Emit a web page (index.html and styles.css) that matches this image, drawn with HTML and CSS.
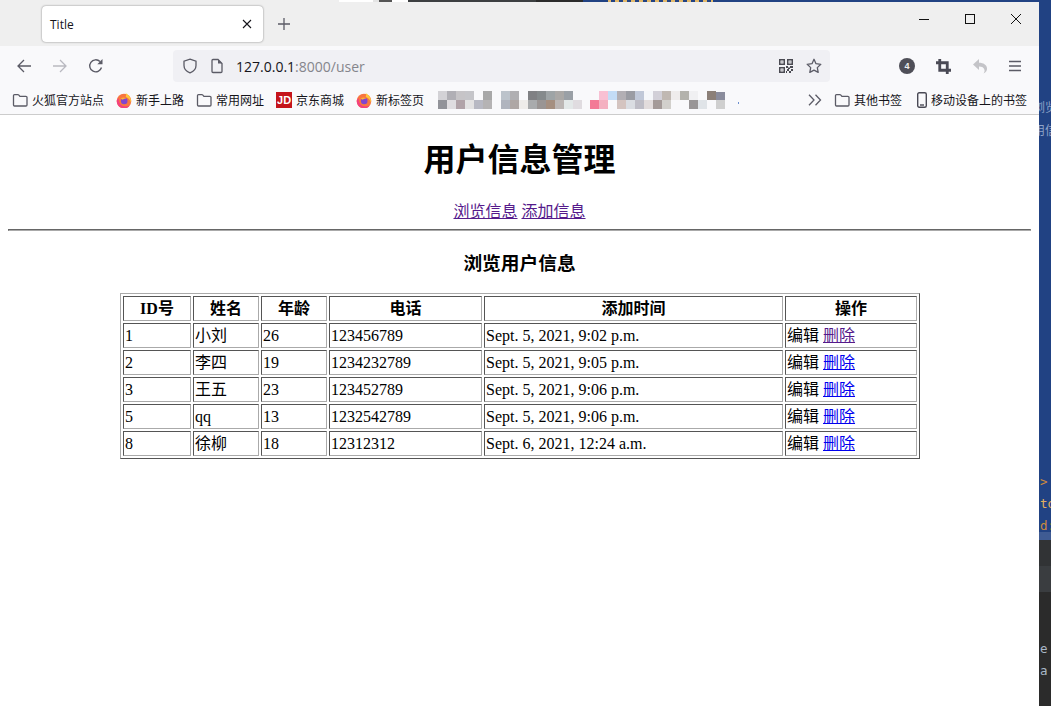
FILE: index.html
```html
<!DOCTYPE html>
<html lang="zh">
<head>
<meta charset="utf-8">
<title>Title</title>
<link rel="stylesheet" href="styles.css">
</head>
<body>
<svg class="defs" width="0" height="0" aria-hidden="true">
  <defs>
    <symbol id="folder" viewBox="0 0 16 16"><path d="M1.500 13V3.600c0-.6.4-1 1-1h3.400c.4 0 .7.2 1 .5l1 1.200h6c.6 0 1.100.4 1.100 1V13c0 .6-.5 1-1.100 1h-11.400c-.6 0-1-.4-1-1z" fill="none" stroke="#5b5b66" stroke-width="1.300"/></symbol>
    <symbol id="fox" viewBox="0 0 16 16">
      <circle cx="8" cy="9" r="7.300" fill="#f9763f"/>
      <path d="M.7 9a7.300 7.300 0 0 0 13.500 3.800c-2 2-7 2.400-9.700-.6C3 10 2.600 8 2.800 6 1.600 7 .7 8 .7 9z" fill="#f4417e"/>
      <path d="M9.500 .5c1 1.700 3.700 2.700 4.900 5.800.6 1.500.8 3 .6 4.400-.6-2.700-3-5-5.300-5.700C10.500 3.300 10 1.800 9.500 .5z" fill="#ffc93a"/>
      <circle cx="8.200" cy="9" r="3.300" fill="#8245cf"/>
      <path d="M4.700 6.500c2-1.400 4.300-1 5.500.3-1.500-.2-2.700 0-3.200 1-.8-.2-1.700-.6-2.300-1.300z" fill="#ffb02e"/>
    </symbol>
  </defs>
</svg>
<div class="desktop">
  <div class="topstrip">
    <span class="seg seg-a"></span><span class="seg seg-b"></span><span class="seg seg-c"></span><span class="seg seg-d"></span><span class="seg seg-e"></span><span class="seg seg-f"></span><span class="seg seg-g"></span><span class="seg seg-h"></span>
  </div>
  <div class="screen">
    <div class="window">
      <div class="tabbar">
        <div class="tab">
          <span class="tab-title">Title</span>
          <svg class="tab-x" width="10" height="10" viewBox="0 0 10 10"><path d="M1 1l8 8M9 1l-8 8" stroke="#15141a" stroke-width="1.100"/></svg>
        </div>
        <svg class="newtab" width="14" height="14" viewBox="0 0 14 14"><path d="M7 1v12M1 7h12" stroke="#5b5b66" stroke-width="1.300"/></svg>
        <div class="winctl">
          <svg width="12" height="12" viewBox="0 0 12 12"><path d="M1 6.500h10" stroke="#111" stroke-width="1"/></svg>
          <svg width="12" height="12" viewBox="0 0 12 12"><rect x="1.500" y="1.500" width="9" height="9" fill="none" stroke="#111" stroke-width="1"/></svg>
          <svg width="12" height="12" viewBox="0 0 12 12"><path d="M1 1l10 10M11 1L1 11" stroke="#111" stroke-width="1"/></svg>
        </div>
      </div>
      <div class="toolbar">
        <svg class="nav-back" width="16" height="16" viewBox="0 0 16 16"><path d="M15 8H2M8 2L2 8l6 6" fill="none" stroke="#5b5b66" stroke-width="1.300"/></svg>
        <svg class="nav-fwd" width="16" height="16" viewBox="0 0 16 16"><path d="M1 8h13M8 2l6 6-6 6" fill="none" stroke="#b9b9c0" stroke-width="1.300"/></svg>
        <svg class="nav-reload" width="16" height="16" viewBox="0 0 16 16"><path d="M13.500 9.500A6 6 0 1 1 12 3.600" fill="none" stroke="#5b5b66" stroke-width="1.400"/><path d="M14.500 1v5.200H9.300z" fill="#5b5b66"/></svg>
        <div class="urlbar">
          <svg class="url-shield" width="16" height="16" viewBox="0 0 16 16"><path d="M8 1.200l6 2v4.300c0 3.500-2.500 6-6 7.300-3.500-1.300-6-3.800-6-7.300V3.200z" fill="none" stroke="#5b5b66" stroke-width="1.300"/></svg>
          <svg class="url-page" width="14" height="16" viewBox="0 0 14 16"><path d="M2 2.500c0-.6.5-1 1-1h5l4 4v8c0 .6-.5 1-1 1H3c-.5 0-1-.4-1-1z" fill="none" stroke="#5b5b66" stroke-width="1.300"/><path d="M8 1.500v4h4z" fill="#5b5b66"/></svg>
          <span class="url-text">127.0.0.1<span class="url-dim">:8000/user</span></span>
          <svg class="url-qr" width="14" height="14" viewBox="0 0 14 14"><path d="M0 0h6v6H0zM1.500 1.500v3h3v-3zM8 0h6v6H8zM9.500 1.500v3h3v-3zM0 8h6v6H0zM1.500 9.500v3h3v-3z" fill="#4a4a52" fill-rule="evenodd"/><path d="M2.500 2.500h1v1h-1zM10.500 2.500h1v1h-1zM2.500 10.500h1v1h-1zM7 7h2v2H7zM11 7h3v2h-3zM8 10h2v2H8zM12 10h2v2h-2zM7 12h1v2H7zM10 12h2v2h-2zM9 8.500h2v1.500H9z" fill="#4a4a52"/></svg>
          <svg class="url-star" width="16" height="16" viewBox="0 0 16 16"><path d="M8 1.300l2 4.400 4.800.6-3.500 3.300.9 4.800L8 12.100l-4.200 2.300.9-4.800L1.200 6.300 6 5.700z" fill="none" stroke="#5b5b66" stroke-width="1.300" stroke-linejoin="round"/></svg>
        </div>
        <div class="tools">
          <span class="badge">4</span>
          <svg width="15" height="15" viewBox="0 0 16 16"><path d="M4 0v12h12M0 4h12v12" fill="none" stroke="#4a4a55" stroke-width="3"/></svg>
          <svg width="16" height="16" viewBox="0 0 16 16"><path d="M7 1L1 6.500 7 12V8.500c3 0 5 1 5.500 3.500.3 1.200-.3 2.500-1 3.500 2.500-1 3.800-3.200 3.500-5.500C14.500 7 11.500 4.800 7 4.800z" fill="#c4c4c8"/></svg>
          <svg width="14" height="14" viewBox="0 0 14 14"><path d="M0 2.500h12M0 7h12M0 11.500h12" stroke="#5b5b66" stroke-width="1.300"/></svg>
        </div>
      </div>
      <div class="bookmarks">
        <span class="bm"><svg class="bm-icon"><use href="#folder"/></svg>火狐官方站点</span>
        <span class="bm"><svg class="bm-icon"><use href="#fox"/></svg>新手上路</span>
        <span class="bm"><svg class="bm-icon"><use href="#folder"/></svg>常用网址</span>
        <span class="bm"><span class="jd">JD</span>京东商城</span>
        <span class="bm"><svg class="bm-icon"><use href="#fox"/></svg>新标签页</span>
        <svg class="mosaic" width="302" height="18" viewBox="0 0 302 18" shape-rendering="crispEdges">
          <g>
            <rect x="0" y="0" width="9" height="9" fill="#d3d2d6"/><rect x="9" y="0" width="9" height="9" fill="#b0afb5"/><rect x="18" y="0" width="9" height="9" fill="#c6c4c7"/><rect x="27" y="0" width="9" height="9" fill="#c5c5c9"/><rect x="45" y="0" width="9" height="9" fill="#a8a8a8"/><rect x="63" y="0" width="9" height="9" fill="#bcc3cb"/><rect x="72" y="0" width="9" height="9" fill="#b0afb2"/><rect x="90" y="0" width="9" height="9" fill="#808184"/><rect x="99" y="0" width="9" height="9" fill="#858a8c"/><rect x="108" y="0" width="9" height="9" fill="#9ea4a6"/><rect x="117" y="0" width="9" height="9" fill="#aaa8a6"/><rect x="126" y="0" width="9" height="9" fill="#9aa0a6"/><rect x="161" y="0" width="9" height="9" fill="#f8c0d3"/><rect x="170" y="0" width="9" height="9" fill="#c3dcf6"/><rect x="179" y="0" width="9" height="9" fill="#b2afb4"/><rect x="188" y="0" width="9" height="9" fill="#9a9ca3"/><rect x="197" y="0" width="9" height="9" fill="#c0c8d8"/><rect x="206" y="0" width="9" height="9" fill="#f5f7fa"/><rect x="215" y="0" width="9" height="9" fill="#d2d0d8"/><rect x="224" y="0" width="9" height="9" fill="#c0b8b2"/><rect x="233" y="0" width="9" height="9" fill="#efecec"/><rect x="242" y="0" width="9" height="9" fill="#b3b2ac"/><rect x="251" y="0" width="9" height="9" fill="#f0f0f2"/><rect x="269" y="0" width="9" height="9" fill="#8c8078"/><rect x="278" y="1" width="9" height="8" fill="#8a8c9c"/>
            <rect x="0" y="9" width="9" height="9" fill="#929399"/><rect x="9" y="9" width="9" height="9" fill="#dfdde0"/><rect x="18" y="9" width="9" height="9" fill="#b1a3a8"/><rect x="27" y="9" width="9" height="9" fill="#e3e2e2"/><rect x="36" y="9" width="9" height="9" fill="#b8b9c3"/><rect x="45" y="9" width="9" height="9" fill="#b5b3b4"/><rect x="63" y="9" width="9" height="9" fill="#b0b4be"/><rect x="72" y="9" width="9" height="9" fill="#aea7a5"/><rect x="81" y="9" width="9" height="9" fill="#eeecea"/><rect x="90" y="9" width="9" height="9" fill="#a9abad"/><rect x="99" y="9" width="9" height="9" fill="#9a9594"/><rect x="108" y="9" width="9" height="9" fill="#a58f80"/><rect x="117" y="9" width="9" height="9" fill="#bcb6b4"/><rect x="126" y="9" width="9" height="9" fill="#e3e8e8"/><rect x="135" y="9" width="9" height="9" fill="#e0dce0"/><rect x="152" y="9" width="9" height="9" fill="#f37a96"/><rect x="161" y="9" width="9" height="9" fill="#f4b0c0"/><rect x="179" y="9" width="9" height="9" fill="#d4c4c0"/><rect x="188" y="9" width="9" height="9" fill="#dadde2"/><rect x="197" y="9" width="9" height="9" fill="#bebdc6"/><rect x="206" y="9" width="9" height="9" fill="#e2dcdc"/><rect x="215" y="9" width="9" height="9" fill="#a49a98"/><rect x="224" y="9" width="9" height="9" fill="#d2d0cc"/><rect x="251" y="9" width="9" height="9" fill="#989596"/><rect x="260" y="9" width="9" height="9" fill="#e0e4e8"/><rect x="278" y="9" width="9" height="9" fill="#cfcfcf"/><rect x="300" y="11" width="1" height="2" fill="#6c8fd0"/>
          </g>
        </svg>
        <svg class="chev" width="14" height="12" viewBox="0 0 14 12"><path d="M1 .8L6 6l-5 5.200M7.500 .8L12.500 6l-5 5.200" fill="none" stroke="#5b5b66" stroke-width="1.300"/></svg>
        <span class="bm"><svg class="bm-icon"><use href="#folder"/></svg>其他书签</span>
        <span class="bm bm-phone"><svg class="phone" width="10" height="16" viewBox="0 0 10 16"><rect x=".7" y=".7" width="8.600" height="14.600" rx="1.500" fill="none" stroke="#4a4a55" stroke-width="1.400"/><path d="M3 13h4" stroke="#4a4a55" stroke-width="1.400"/></svg>移动设备上的书签</span>
      </div>
      <main class="content">
        <h1 class="page-title">用户信息管理</h1>
        <p class="nav-links"><a class="visited" href="#">浏览信息</a> <a class="visited" href="#">添加信息</a></p>
        <hr class="rule">
        <h3 class="sub-title">浏览用户信息</h3>
        <table class="users">
          <colgroup><col class="c1"><col class="c2"><col class="c3"><col class="c4"><col class="c5"><col class="c6"></colgroup>
          <thead>
            <tr><th>ID号</th><th>姓名</th><th>年龄</th><th>电话</th><th>添加时间</th><th>操作</th></tr>
          </thead>
          <tbody>
            <tr><td>1</td><td>小刘</td><td>26</td><td>123456789</td><td>Sept. 5, 2021, 9:02 p.m.</td><td>编辑 <a class="visited" href="#">删除</a></td></tr>
            <tr><td>2</td><td>李四</td><td>19</td><td>1234232789</td><td>Sept. 5, 2021, 9:05 p.m.</td><td>编辑 <a href="#">删除</a></td></tr>
            <tr><td>3</td><td>王五</td><td>23</td><td>123452789</td><td>Sept. 5, 2021, 9:06 p.m.</td><td>编辑 <a href="#">删除</a></td></tr>
            <tr><td>5</td><td>qq</td><td>13</td><td>1232542789</td><td>Sept. 5, 2021, 9:06 p.m.</td><td>编辑 <a href="#">删除</a></td></tr>
            <tr><td>8</td><td>徐柳</td><td>18</td><td>12312312</td><td>Sept. 6, 2021, 12:24 a.m.</td><td>编辑 <a href="#">删除</a></td></tr>
          </tbody>
        </table>
      </main>
    </div>
    <aside class="side">
      <div class="side-blue">
        <div class="cjk-line first">浏览</div>
        <div class="cjk-line">用信</div>
        <div class="code orange first-code">&gt;</div>
        <div class="code yellow">to</div>
        <div class="code orange">d:</div>
      </div>
      <div class="side-sel"></div>
      <div class="side-dark1"></div>
      <div class="side-dark2"></div>
      <div class="side-dark3">
        <div class="code pale first-dark">e</div>
        <div class="code pale">a</div>
      </div>
    </aside>
  </div>
</div>
</body>
</html>
```

FILE: styles.css
```css
* { box-sizing: border-box; }
html, body { margin: 0; padding: 0; height: 100%; overflow: hidden; background: #fff; }
body { font-family: "Liberation Serif", "Noto Sans CJK SC", serif; font-size: 16px; color: #000; }
.defs { position: absolute; }

.desktop { display: flex; flex-direction: column; height: 706px; width: 1051px; overflow: hidden; }

.topstrip { display: flex; height: 2px; flex: none; }
.seg { display: block; height: 100%; }
.seg-a { width: 339px; background: #efefef; }
.seg-b { width: 34px; background: #fff; }
.seg-c { width: 6px; background: #e4e4e4; }
.seg-d { width: 13px; background: #555; }
.seg-e { width: 16px; background: #fff; }
.seg-f { width: 128px; background: #3c3f41; }
.seg-g { width: 47px; background: #2b2b2b; }
.seg-h { flex: 1; background: linear-gradient(90deg, #214283 0 25px, transparent 25px 130px, #214283 130px), repeating-linear-gradient(90deg, #e3b96a 0 4px, #214283 4px 8px); }

.screen { display: flex; flex: 1; min-height: 0; }
.window { width: 1039px; flex: none; display: flex; flex-direction: column; background: #fff; }

.tabbar { height: 44px; flex: none; display: flex; align-items: flex-start; background: #efefef; padding-left: 42px; }
.tab { width: 221px; height: 36px; margin-top: 4px; padding: 0 11px 0 8px; background: #fff; border-radius: 4px; box-shadow: 0 0 2px rgba(0,0,0,.5); display: flex; align-items: center; justify-content: space-between; }
.tab-title { font: 12px "Open Sans", "Liberation Sans", sans-serif; color: #15141a; }
.newtab { margin: 15px 0 0 14px; }
.winctl { margin-left: auto; margin-top: 11px; padding-right: 17px; display: flex; gap: 34px; }

.toolbar { height: 40px; flex: none; display: flex; align-items: center; background: #f9f9fb; padding-left: 16px; }
.nav-fwd { margin-left: 20px; }
.nav-reload { margin-left: 20px; }
.urlbar { width: 657px; height: 32px; margin-left: 69px; background: #f0f0f4; border-radius: 4px; display: flex; align-items: center; padding: 0 8px 0 9px; }
.url-page { margin-left: 12px; }
.url-text { margin-left: 12px; font: 14px "Open Sans", "Liberation Sans", sans-serif; color: #15141a; }
.url-dim { color: #85858c; }
.url-qr { margin-left: auto; }
.url-star { margin-left: 13px; }
.tools { display: flex; align-items: center; margin-left: 69px; gap: 21px; }
.badge { width: 16px; height: 16px; border-radius: 50%; background: #4f4f58; color: #eee; font: bold 9px/16px "Liberation Sans", sans-serif; text-align: center; }

.bookmarks { height: 29px; flex: none; display: flex; align-items: center; gap: 12px; background: #f9f9fb; border-bottom: 1px solid #ccc; padding-left: 12px; font: 12px "Noto Sans CJK SC", sans-serif; color: #15141a; }
.bm { display: flex; align-items: center; gap: 4px; line-height: 16px; white-space: nowrap; }
.bm-icon { width: 16px; height: 16px; flex: none; }
.jd { width: 16px; height: 16px; background: #c5141b; color: #fff; font: bold 11px/16px "Liberation Sans", sans-serif; text-align: center; }
.mosaic { flex: none; margin-left: 2px; }
.chev { margin-left: 56px; }
.bm-phone { gap: 4px; margin-left: 3px; }
.bm-phone .phone { flex: none; }

.content { flex: 1; padding: 0 8px; text-align: center; }
.page-title { font-size: 32px; line-height: 37px; margin: 27px 0 0; }
.nav-links { margin: 21px 0 0; line-height: 24px; }
a { color: #00e; text-decoration: underline; }
a.visited { color: #551a8b; }
.rule { margin: 5px 0 0; height: 2px; border: 1px solid; border-color: #666 #999 #aaa #666; }
.sub-title { font-size: 18.720px; line-height: 24px; margin: 21px 0 0; }

.users { width: 800px; margin: 17px 0 0 112px; table-layout: fixed; border-collapse: separate; border-spacing: 2px; border: 1px solid; border-color: #aaa #555 #555 #aaa; text-align: left; }
.users th, .users td { border: 1px solid; border-color: #555 #aaa #aaa #555; padding: 1px; height: 25px; line-height: 21px; white-space: nowrap; }
.users th { text-align: center; }
.c1 { width: 68px; }
.c2 { width: 66px; }
.c3 { width: 66px; }
.c4 { width: 153px; }
.c5 { width: 299px; }
.c6 { width: 132px; }

.side { flex: 1; min-width: 0; display: flex; flex-direction: column; overflow: hidden; }
.side-blue { height: 530px; background: #214283; flex: none; }
.side-sel { height: 8px; flex: none; background: #3f5b93; }
.side-dark1 { height: 26px; flex: none; background: #313335; }
.side-dark2 { height: 26px; flex: none; background: #3a3d40; }
.side-dark3 { flex: 1; background: #2b2b2b; }
.cjk-line { font: 12px/23px "Noto Sans CJK SC", sans-serif; color: #8fa3c8; margin-left: -6px; white-space: nowrap; }
.cjk-line.first { margin-top: 93px; }
.code { font: 12.500px/22px "DejaVu Sans Mono", monospace; padding-left: 1px; white-space: nowrap; }
.first-code { margin-top: 330px; }
.orange { color: #cc8a3e; }
.yellow { color: #e0b060; }
.pale { color: #a9b7c6; }
.first-dark { margin-top: 46px; }
```
